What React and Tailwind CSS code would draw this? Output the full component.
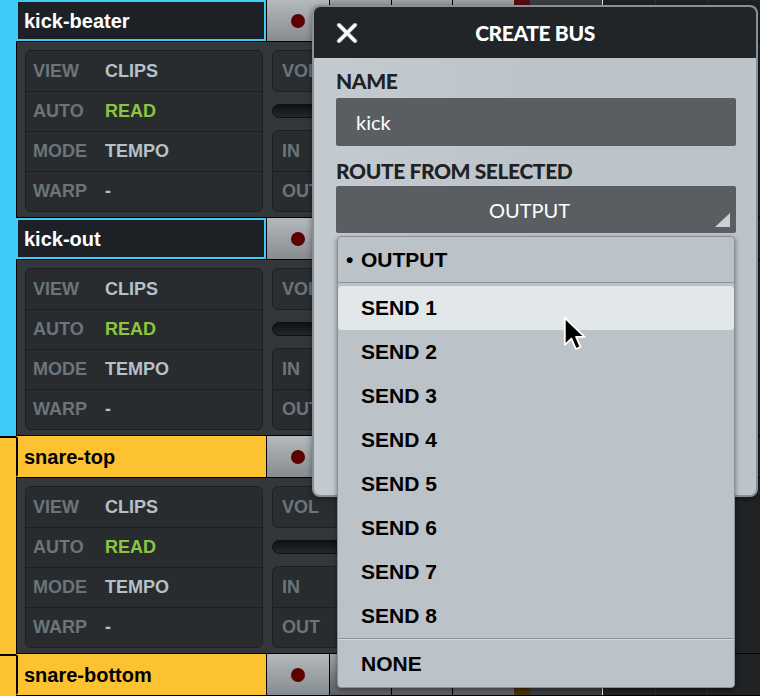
import React from "react";

const tracks = [
  { name: "kick-beater", kind: "cyan" },
  { name: "kick-out", kind: "cyan" },
  { name: "snare-top", kind: "yellow" },
  { name: "snare-bottom", kind: "yellow", last: true },
];

const rows = [
  { label: "VIEW", value: "CLIPS", cls: "text-[#b6c0c9]" },
  { label: "AUTO", value: "READ", cls: "text-[#8cc63e]" },
  { label: "MODE", value: "TEMPO", cls: "text-[#b6c0c9]" },
  { label: "WARP", value: "-", cls: "text-[#b6c0c9]" },
];

function Track({ name, kind, last }) {
  const cyan = kind === "cyan";
  return (
    <div className="flex h-[218px] shrink-0">
      <div className={cyan ? "w-[16px] bg-[#3ecbf7]" : "w-[16px] border-t-2 border-black bg-[#fdc231]"} />
      <div className="flex flex-1 flex-col">
        <div className="flex h-[41px]">
          <div
            className={
              cyan
                ? "flex w-[250px] items-center border-2 border-[#3ecbf7] bg-[#1d2125] pl-[6px] text-[20px] font-bold text-white"
                : "flex w-[250px] items-center border-2 border-[#fdc231] border-l-black bg-[#fdc231] pl-[6px] text-[20px] font-bold text-black"
            }
          >
            {name}
          </div>
          <div className="w-px bg-black" />
          <div className="flex w-[62px] items-center justify-center bg-gradient-to-b from-[#b4b9bd] to-[#878c91]">
            <div className="h-[14px] w-[14px] rounded-full bg-[#5c0000]" />
          </div>
          <div className="w-px bg-black" />
          <div className="w-[61px] bg-gradient-to-b from-[#9da2a6] to-[#5b5f63]" />
          <div className="w-px bg-black" />
          <div className="w-[60px] bg-gradient-to-b from-[#9da2a6] to-[#5b5f63]" />
          <div className="w-px bg-black" />
          <div className="w-[61px] bg-gradient-to-b from-[#9da2a6] to-[#5b5f63]" />
          <div className={cyan ? "w-[16px] bg-[#5a0c0c]" : "w-[16px] bg-[#4b300a]"} />
          <div className="w-[72px] bg-[#3a3e41]" />
          <div className="w-px bg-[#e6e6e6]" />
          <div className="w-[52px] bg-[#1f2326]" />
          <div className="w-px bg-[#2d3134]" />
          <div className="w-[51px] bg-[#1f2326]" />
          <div className="w-px bg-[#2d3134]" />
          <div className="flex-1 bg-[#1f2326]" />
        </div>
        <div className="h-px bg-black" />
        {!last && (
          <div className="flex h-[175px]">
            <div className="flex w-[587px] gap-[9px] border-l border-black bg-[#33373a] pl-[8px] pt-[8px]">
              <div className="flex h-[162px] w-[238px] flex-col overflow-hidden rounded-[6px] border border-[#1d2023] bg-[#282c2f]">
                {rows.map((r, i) => (
                  <div
                    key={r.label}
                    className={
                      i === 0
                        ? "flex h-[40px] items-center pl-[7px] text-[18px] font-bold"
                        : "flex h-[40px] items-center border-t border-[#1c1f22] pl-[7px] text-[18px] font-bold"
                    }
                  >
                    <span className="w-[72px] text-[#6c747a]">{r.label}</span>
                    <span className={r.cls}>{r.value}</span>
                  </div>
                ))}
              </div>
              <div className="flex w-[323px] flex-col">
                <div className="flex h-[42px] items-center rounded-[6px] border border-[#1d2023] bg-[#2a2e31] pl-[9px] text-[18px] font-bold text-[#6c747a]">
                  VOL
                </div>
                <div className="flex h-[38px] items-center">
                  <div className="h-[14px] w-full rounded-full border border-[#0d0f10] bg-gradient-to-b from-[#0f1112] to-[#24282b]" />
                </div>
                <div className="flex h-[82px] flex-col overflow-hidden rounded-[6px] border border-[#1d2023] bg-[#282c2f] text-[18px] font-bold text-[#6c747a]">
                  <div className="flex h-[40px] items-center pl-[9px]">IN</div>
                  <div className="flex flex-1 items-center border-t border-[#1c1f22] pl-[9px]">OUT</div>
                </div>
              </div>
            </div>
            <div className="w-px bg-[#121416]" />
            <div className="flex-1 bg-[#1f2326]" />
          </div>
        )}
        {!last && <div className="h-px bg-black" />}
      </div>
    </div>
  );
}

function Dialog() {
  return (
    <div className="absolute left-[312px] top-[5px] flex h-[492px] w-[446px] flex-col overflow-hidden rounded-[8px] border-2 border-[#899095] bg-gradient-to-r from-[#c4cbd0] via-[#bcc4ca] to-[#bcc4ca] font-['Lato',sans-serif] shadow-[0_2px_6px_rgba(0,0,0,0.4)]">
      <div className="grid h-[51px] shrink-0 grid-cols-[1fr_auto_1fr] items-center bg-[#212528] px-[22px]">
        <svg width="22" height="20" viewBox="0 0 22 20" className="block">
          <path d="M3 2 L19 18 M19 2 L3 18" stroke="#5b6166" strokeWidth="5" strokeLinecap="round" />
          <path d="M3 2 L19 18 M19 2 L3 18" stroke="#ffffff" strokeWidth="3.2" strokeLinecap="round" />
        </svg>
        <div className="text-[21px] font-black tracking-[-0.4px] text-white">CREATE BUS</div>
        <div />
      </div>
      <div className="flex flex-col px-[22px] pt-[12px]">
        <div className="text-[21px] font-black leading-none tracking-[-0.4px] text-[#1e2224]">NAME</div>
        <div className="mt-[7px] flex h-[48px] w-[400px] items-center rounded-[2px] bg-[#5a5e63] pl-[20px] text-[20px] text-white">
          kick
        </div>
        <div className="mt-[14px] text-[21px] font-black leading-none tracking-[-0.4px] text-[#1e2224]">
          ROUTE FROM SELECTED
        </div>
        <div className="relative mt-[5px] flex h-[47px] w-[400px] items-center justify-center rounded-[2px] bg-[#5a5e63] pr-[13px] text-[20px] text-white">
          OUTPUT
          <svg width="15" height="14" viewBox="0 0 15 14" className="absolute bottom-[6px] right-[6px]">
            <polygon points="15,0 15,14 0,14" fill="#c9cfd3" />
          </svg>
        </div>
      </div>
    </div>
  );
}

function Dropdown() {
  const sends = ["SEND 1", "SEND 2", "SEND 3", "SEND 4", "SEND 5", "SEND 6", "SEND 7", "SEND 8"];
  return (
    <div className="absolute left-[337px] top-[236px] flex h-[452px] w-[398px] flex-col rounded-[4px] border border-[#8a9298] bg-[#bbc3c9] font-['Liberation_Sans',Arial,sans-serif] text-[21px] font-bold text-black shadow-[0_2px_5px_rgba(0,0,0,0.45)]">
      <div className="flex h-[45px] shrink-0 items-center pl-[8px]">
        <span className="w-[15px]">•</span>
        OUTPUT
      </div>
      <div className="h-px shrink-0 bg-[#8c9499]" />
      <div className="h-[3px] shrink-0" />
      {sends.map((s, i) => (
        <div
          key={s}
          className={
            i === 0
              ? "flex h-[44px] shrink-0 items-center rounded-[4px] bg-[#e2e7ea] pl-[23px]"
              : "flex h-[44px] shrink-0 items-center pl-[23px]"
          }
        >
          {s}
        </div>
      ))}
      <div className="h-px shrink-0 bg-[#8c9499]" />
      <div className="h-px shrink-0 bg-[#d3d9dd]" />
      <div className="flex flex-1 items-center pl-[23px]">NONE</div>
    </div>
  );
}

function Cursor() {
  return (
    <svg
      width="24"
      height="36"
      viewBox="0 0 20 30"
      className="absolute left-[563px] top-[316px]"
    >
      <path
        d="M1.5 1.5 L1.5 24 L7 18.8 L10.8 27.5 L14.6 25.8 L10.9 17.4 L18 17.4 Z"
        fill="#000000"
        stroke="#ffffff"
        strokeWidth="1.5"
        strokeLinejoin="round"
      />
    </svg>
  );
}

export default function App() {
  return (
    <div className="relative h-[696px] w-[760px] overflow-hidden bg-[#1f2326] font-['Liberation_Sans',Arial,sans-serif]">
      <div className="flex flex-col">
        {tracks.map((t) => (
          <Track key={t.name} name={t.name} kind={t.kind} last={t.last} />
        ))}
      </div>
      <Dialog />
      <Dropdown />
      <Cursor />
    </div>
  );
}
